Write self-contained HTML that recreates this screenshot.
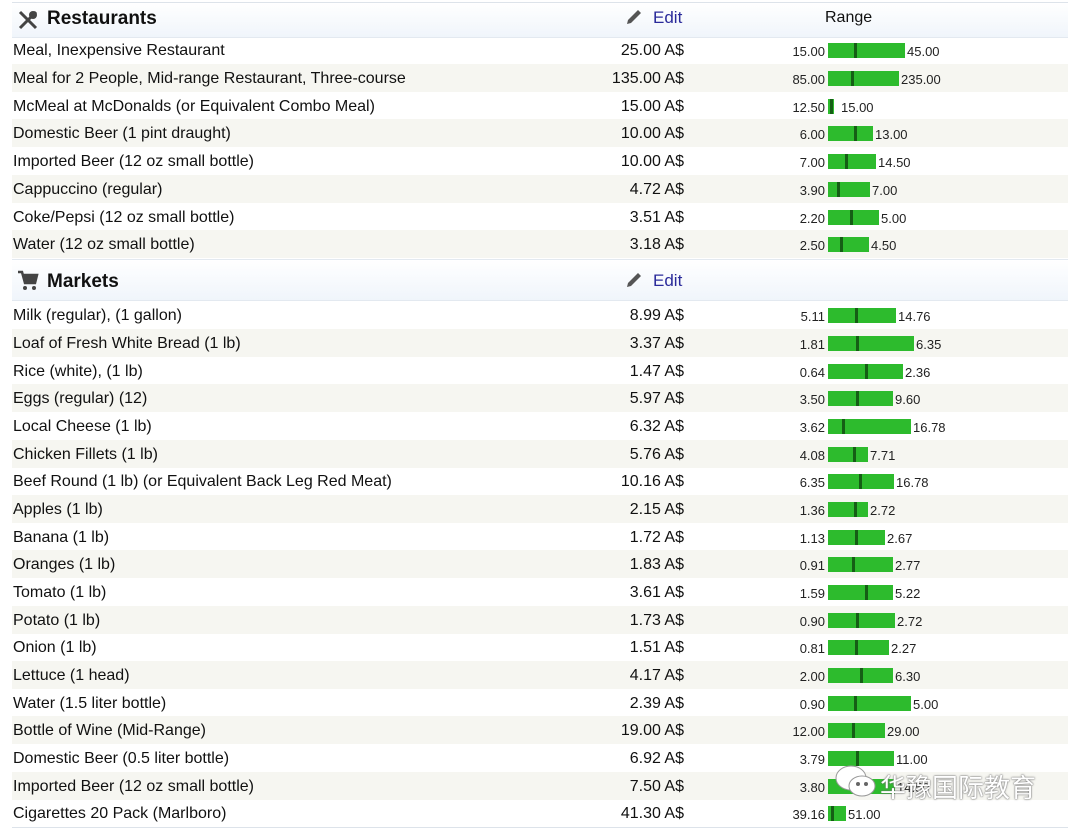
<!DOCTYPE html>
<html><head><meta charset="utf-8"><style>
body{margin:0;width:1080px;height:832px;background:#fff;font-family:"Liberation Sans",Arial,sans-serif;position:relative;overflow:hidden;color:#111}
.top{position:absolute;left:12px;width:1056px;top:2px;height:1px;background:#dde3ea}
.hdr{position:absolute;left:12px;width:1056px;height:34px;background:linear-gradient(#fff,#f0f5fb);border-bottom:1px solid #e3e9f0}
.hdr .t{position:absolute;left:35px;top:5px;font-size:19px;font-weight:bold;color:#111}
.hdr .e{position:absolute;left:641px;top:5px;font-size:17px;color:#2a2a9a}
.hdr .r{position:absolute;left:813px;top:6px;font-size:16px}
.row{position:absolute;left:12px;width:1056px;height:28px;font-size:16px}
.row.g{background:#f6f6f1}
.n{position:absolute;left:1px;top:6px;white-space:nowrap}
.p{position:absolute;right:384px;top:6px;white-space:nowrap}
.lo{position:absolute;right:243px;top:8px;font-size:13px;color:#222}
.bar{position:absolute;left:816px;top:7px;height:15px;background:#2dbb2d}
.tk{position:absolute;top:0;width:3px;height:15px;background:#155e15}
.hi{position:absolute;top:8px;font-size:13px;color:#222}
.wm{position:absolute;left:880px;top:768px;font-size:26px;color:#fff;text-shadow:0 0 2px #777,0 0 1px #555;font-family:"Liberation Sans","Noto Sans CJK SC",sans-serif}
</style></head><body>
<div class="top"></div>
<div class="hdr" style="top:3px"><svg style="position:absolute;left:5px;top:6px" width="22" height="22" viewBox="0 0 22 22"><path d="M3 3 L19 19 M19 3 L3 19" stroke="#444" stroke-width="3"/><circle cx="16" cy="6" r="4" fill="#444"/></svg><span class="t">Restaurants</span><svg style="position:absolute;left:612px;top:4px" width="20" height="20" viewBox="0 0 20 20"><path d="M3 17 L4 13 L14 3 L17 6 L7 16 Z" fill="#555"/></svg><span class="e">Edit</span><span class="r">Range</span></div>

<div class="row" style="top:36px"><span class="n">Meal, Inexpensive Restaurant</span><span class="p">25.00 A$</span><span class="lo">15.00</span><div class="bar" style="width:77px"><div class="tk" style="left:26px"></div></div><span class="hi" style="left:895px">45.00</span></div>
<div class="row g" style="top:64px"><span class="n">Meal for 2 People, Mid-range Restaurant, Three-course</span><span class="p">135.00 A$</span><span class="lo">85.00</span><div class="bar" style="width:71px"><div class="tk" style="left:23px"></div></div><span class="hi" style="left:889px">235.00</span></div>
<div class="row" style="top:92px"><span class="n">McMeal at McDonalds (or Equivalent Combo Meal)</span><span class="p">15.00 A$</span><span class="lo">12.50</span><div class="bar" style="width:6px"><div class="tk" style="left:2px"></div></div><span class="hi" style="left:829px">15.00</span></div>
<div class="row g" style="top:119px"><span class="n">Domestic Beer (1 pint draught)</span><span class="p">10.00 A$</span><span class="lo">6.00</span><div class="bar" style="width:45px"><div class="tk" style="left:26px"></div></div><span class="hi" style="left:863px">13.00</span></div>
<div class="row" style="top:147px"><span class="n">Imported Beer (12 oz small bottle)</span><span class="p">10.00 A$</span><span class="lo">7.00</span><div class="bar" style="width:48px"><div class="tk" style="left:17px"></div></div><span class="hi" style="left:866px">14.50</span></div>
<div class="row g" style="top:175px"><span class="n">Cappuccino (regular)</span><span class="p">4.72 A$</span><span class="lo">3.90</span><div class="bar" style="width:42px"><div class="tk" style="left:9px"></div></div><span class="hi" style="left:860px">7.00</span></div>
<div class="row" style="top:203px"><span class="n">Coke/Pepsi (12 oz small bottle)</span><span class="p">3.51 A$</span><span class="lo">2.20</span><div class="bar" style="width:51px"><div class="tk" style="left:22px"></div></div><span class="hi" style="left:869px">5.00</span></div>
<div class="row g" style="top:230px"><span class="n">Water (12 oz small bottle)</span><span class="p">3.18 A$</span><span class="lo">2.50</span><div class="bar" style="width:41px"><div class="tk" style="left:12px"></div></div><span class="hi" style="left:859px">4.50</span></div>

<div class="hdr" style="top:259px;height:40px;border-top:1px solid #e3e9f0"><svg style="position:absolute;left:5px;top:10px" width="22" height="22" viewBox="0 0 22 22"><path d="M1 2 H5 L8 13 H18 L20 5 H6" fill="none" stroke="#444" stroke-width="2.5"/><rect x="7" y="5" width="12" height="7" fill="#444"/><circle cx="8" cy="18" r="2" fill="#444"/><circle cx="17" cy="18" r="2" fill="#444"/></svg><span class="t" style="top:11px">Markets</span><svg style="position:absolute;left:612px;top:10px" width="20" height="20" viewBox="0 0 20 20"><path d="M3 17 L4 13 L14 3 L17 6 L7 16 Z" fill="#555"/></svg><span class="e" style="top:11px">Edit</span></div>

<div class="row" style="top:301px"><span class="n">Milk (regular), (1 gallon)</span><span class="p">8.99 A$</span><span class="lo">5.11</span><div class="bar" style="width:68px"><div class="tk" style="left:27px"></div></div><span class="hi" style="left:886px">14.76</span></div>
<div class="row g" style="top:329px"><span class="n">Loaf of Fresh White Bread (1 lb)</span><span class="p">3.37 A$</span><span class="lo">1.81</span><div class="bar" style="width:86px"><div class="tk" style="left:28px"></div></div><span class="hi" style="left:904px">6.35</span></div>
<div class="row" style="top:357px"><span class="n">Rice (white), (1 lb)</span><span class="p">1.47 A$</span><span class="lo">0.64</span><div class="bar" style="width:75px"><div class="tk" style="left:37px"></div></div><span class="hi" style="left:893px">2.36</span></div>
<div class="row g" style="top:384px"><span class="n">Eggs (regular) (12)</span><span class="p">5.97 A$</span><span class="lo">3.50</span><div class="bar" style="width:65px"><div class="tk" style="left:28px"></div></div><span class="hi" style="left:883px">9.60</span></div>
<div class="row" style="top:412px"><span class="n">Local Cheese (1 lb)</span><span class="p">6.32 A$</span><span class="lo">3.62</span><div class="bar" style="width:83px"><div class="tk" style="left:14px"></div></div><span class="hi" style="left:901px">16.78</span></div>
<div class="row g" style="top:440px"><span class="n">Chicken Fillets (1 lb)</span><span class="p">5.76 A$</span><span class="lo">4.08</span><div class="bar" style="width:40px"><div class="tk" style="left:25px"></div></div><span class="hi" style="left:858px">7.71</span></div>
<div class="row" style="top:467px"><span class="n">Beef Round (1 lb) (or Equivalent Back Leg Red Meat)</span><span class="p">10.16 A$</span><span class="lo">6.35</span><div class="bar" style="width:66px"><div class="tk" style="left:31px"></div></div><span class="hi" style="left:884px">16.78</span></div>
<div class="row g" style="top:495px"><span class="n">Apples (1 lb)</span><span class="p">2.15 A$</span><span class="lo">1.36</span><div class="bar" style="width:40px"><div class="tk" style="left:26px"></div></div><span class="hi" style="left:858px">2.72</span></div>
<div class="row" style="top:523px"><span class="n">Banana (1 lb)</span><span class="p">1.72 A$</span><span class="lo">1.13</span><div class="bar" style="width:57px"><div class="tk" style="left:27px"></div></div><span class="hi" style="left:875px">2.67</span></div>
<div class="row g" style="top:550px"><span class="n">Oranges (1 lb)</span><span class="p">1.83 A$</span><span class="lo">0.91</span><div class="bar" style="width:65px"><div class="tk" style="left:24px"></div></div><span class="hi" style="left:883px">2.77</span></div>
<div class="row" style="top:578px"><span class="n">Tomato (1 lb)</span><span class="p">3.61 A$</span><span class="lo">1.59</span><div class="bar" style="width:65px"><div class="tk" style="left:37px"></div></div><span class="hi" style="left:883px">5.22</span></div>
<div class="row g" style="top:606px"><span class="n">Potato (1 lb)</span><span class="p">1.73 A$</span><span class="lo">0.90</span><div class="bar" style="width:67px"><div class="tk" style="left:28px"></div></div><span class="hi" style="left:885px">2.72</span></div>
<div class="row" style="top:633px"><span class="n">Onion (1 lb)</span><span class="p">1.51 A$</span><span class="lo">0.81</span><div class="bar" style="width:61px"><div class="tk" style="left:27px"></div></div><span class="hi" style="left:879px">2.27</span></div>
<div class="row g" style="top:661px"><span class="n">Lettuce (1 head)</span><span class="p">4.17 A$</span><span class="lo">2.00</span><div class="bar" style="width:65px"><div class="tk" style="left:32px"></div></div><span class="hi" style="left:883px">6.30</span></div>
<div class="row" style="top:689px"><span class="n">Water (1.5 liter bottle)</span><span class="p">2.39 A$</span><span class="lo">0.90</span><div class="bar" style="width:83px"><div class="tk" style="left:26px"></div></div><span class="hi" style="left:901px">5.00</span></div>
<div class="row g" style="top:716px"><span class="n">Bottle of Wine (Mid-Range)</span><span class="p">19.00 A$</span><span class="lo">12.00</span><div class="bar" style="width:57px"><div class="tk" style="left:24px"></div></div><span class="hi" style="left:875px">29.00</span></div>
<div class="row" style="top:744px"><span class="n">Domestic Beer (0.5 liter bottle)</span><span class="p">6.92 A$</span><span class="lo">3.79</span><div class="bar" style="width:66px"><div class="tk" style="left:28px"></div></div><span class="hi" style="left:884px">11.00</span></div>
<div class="row g" style="top:772px"><span class="n">Imported Beer (12 oz small bottle)</span><span class="p">7.50 A$</span><span class="lo">3.80</span><div class="bar" style="width:67px"><div class="tk" style="left:27px"></div></div><span class="hi" style="left:885px">14.50</span></div>
<div class="row" style="top:799px"><span class="n">Cigarettes 20 Pack (Marlboro)</span><span class="p">41.30 A$</span><span class="lo">39.16</span><div class="bar" style="width:18px"><div class="tk" style="left:3px"></div></div><span class="hi" style="left:836px">51.00</span></div>
<div style="position:absolute;left:12px;width:1056px;top:827px;height:1px;background:#dde3ea"></div>

<svg style="position:absolute;left:834px;top:764px" width="44" height="36" viewBox="0 0 44 36"><ellipse cx="17" cy="14" rx="15" ry="12" fill="#fff" stroke="#999"/><ellipse cx="28" cy="22" rx="13" ry="10" fill="#fff" stroke="#999"/><circle cx="24" cy="20" r="2" fill="#666"/><circle cx="32" cy="20" r="2" fill="#666"/></svg>
<div class="wm">华豫国际教育</div>
</body></html>
